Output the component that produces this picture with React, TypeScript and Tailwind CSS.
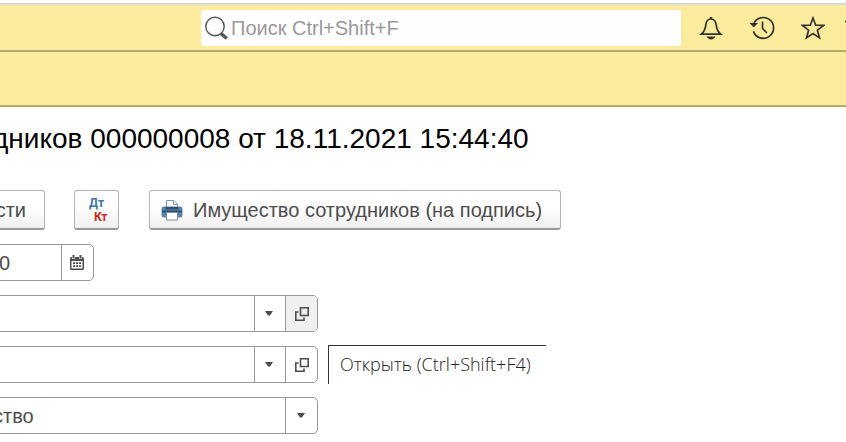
import { useState } from 'react';
import clsx from 'clsx';

interface IconButtonProps {
  label: string;
  className?: string;
  children: React.ReactNode;
}

interface FieldProps {
  label: string;
  value?: string;
  className: string;
  inputClassName?: string;
  children: React.ReactNode;
}

function SearchIcon() {
  return (
    <svg width="24" height="24" viewBox="0 0 24 24" fill="none" stroke="#595959">
      <circle cx="10" cy="10.5" r="9.2" strokeWidth="1.5" />
      <path d="M15.800 17.300l6 5.200" strokeWidth="3.6" />
    </svg>
  );
}

function BellIcon() {
  return (
    <svg width="24" height="24" viewBox="0 0 24 24" fill="none" stroke="#333" strokeWidth="1.7">
      <path d="M12 3c-3.400 0-4.800 2.300-5.200 5.800-.4 4.300-1.400 6.600-4.600 9.400h19.600c-3.200-2.800-4.200-5.100-4.600-9.400C16.800 5.300 15.400 3 12 3z" />
      <path d="M12 1v2" strokeWidth="2.5" />
      <path d="M7.500 20.500h9c-1 1.800-2.500 2.900-4.500 2.900s-3.500-1.100-4.500-2.900z" fill="#333" stroke="none" />
    </svg>
  );
}

function HistoryIcon() {
  return (
    <svg width="26" height="24" viewBox="0 0 26 24" className="shrink-0" fill="none" stroke="#333" strokeWidth="1.7">
      <path d="M4.500 8.200a10.400 10.400 0 1 1-.1 7.200" />
      <path d="M.5 7h8.500l-4.300 4.500z" fill="#333" stroke="none" />
      <path d="M13.500 5.500v7l4.500 4.500" />
    </svg>
  );
}

function StarIcon() {
  return (
    <svg width="24" height="24" viewBox="0 0 24 24" fill="none" stroke="#333" strokeWidth="1.7">
      <path d="M12 2l2.700 7.200 7.900.2-6.200 4.800 2.100 7.700-6.500-4.300-6.500 4.300 2.100-7.700-6.200-4.800 7.900-.2z" />
    </svg>
  );
}

function MenuIcon() {
  return (
    <svg width="38" height="24" viewBox="0 0 38 24" className="shrink-0" stroke="#333" strokeWidth="1.5">
      <path d="M0 5.500h38" />
    </svg>
  );
}

function PrinterIcon() {
  return (
    <svg width="22" height="22" viewBox="0 0 22 22">
      <path d="M5.500 9V1.500h7.500l3.500 3.500v4" fill="#fff" stroke="#8797a8" />
      <path d="M12.500 1.500v4h4" fill="none" stroke="#8797a8" />
      <rect x=".5" y="7.500" width="21" height="11" rx="2.500" fill="#5a83a9" />
      <path d="M4.500 8h13v2.500h-13z" fill="#2d5074" />
      <path d="M1 12.500h20" stroke="#2d5074" strokeWidth="2" />
      <path d="M5.500 13.500h11v7.500h-11z" fill="#fff" stroke="#7d8ea0" />
    </svg>
  );
}

function CalendarIcon() {
  return (
    <svg width="14" height="15" viewBox="0 0 14 15">
      <rect y="2" width="14" height="13" rx="1.500" fill="#4d4d4d" />
      <path d="M1.500 6h11v7.500h-11z" fill="#fff" />
      <path d="M2 1h3v3H2zM9 1h3v3H9z" fill="#fff" />
      <path d="M3.500 0v3.500M10.500 0v3.500" stroke="#4d4d4d" strokeWidth="2" />
      <path d="M3 8.200h8M3 11.200h8" stroke="#4d4d4d" strokeWidth="1.800" strokeDasharray="2 1" />
    </svg>
  );
}

function ArrowIcon() {
  return (
    <svg width="8" height="5" viewBox="0 0 8 5">
      <path d="M0 0h8L5 4.500H3z" fill="#4d4d4d" />
    </svg>
  );
}

function OpenIcon() {
  return (
    <svg width="14" height="14" viewBox="0 0 14 14" fill="none" stroke="#4d4d4d" strokeWidth="1.600">
      <path d="M5.500.8h7.700v7.700H5.500z" />
      <path d="M3.500 5H.8v8.200h8.200v-2.700" />
    </svg>
  );
}

function HeaderButton({ label, children }: IconButtonProps) {
  return (
    <button type="button" aria-label={label} className="flex h-6 w-6 shrink-0 items-center justify-center">
      {children}
    </button>
  );
}

function FieldButton({ label, className, children }: IconButtonProps) {
  return (
    <button
      type="button"
      aria-label={label}
      className={clsx('flex shrink-0 items-center justify-center border-l border-[#999]', className)}
    >
      {children}
    </button>
  );
}

function CommandButton({ label, className, children }: IconButtonProps) {
  return (
    <button
      type="button"
      aria-label={label}
      className={clsx(
        'flex h-10 items-center rounded-[3px] border border-b-2 border-[#b3b3b3] border-b-[#999] bg-linear-to-b from-white from-40% to-[#f0f0f0] text-xl whitespace-nowrap text-[#4d4d4d]',
        className
      )}
    >
      {children}
    </button>
  );
}

function Field({ label, value = '', className, inputClassName, children }: FieldProps) {
  const [text, setText] = useState(value);

  return (
    <div className={clsx('flex h-[37px] overflow-hidden rounded-[5px] border border-[#999] bg-white', className)}>
      <input
        type="text"
        aria-label={label}
        value={text}
        onChange={(e) => setText(e.target.value)}
        className={clsx('min-w-0 flex-1 outline-none', inputClassName)}
      />
      {children}
    </div>
  );
}

export default function App() {
  return (
    <div className="overflow-hidden bg-white pt-[3px] font-['Liberation_Sans',Arial,sans-serif] text-[#4d4d4d]">
      <header className="flex items-center gap-[18px] overflow-hidden border-t-2 border-b-2 border-t-[#d9d9d9] border-b-[#b5a970] bg-[#fbec9d] pt-[5px] pb-1 pl-[201px]">
        <label className="flex h-9 min-w-0 flex-1 items-center gap-0.5 rounded-[3px] bg-white pl-1">
          <SearchIcon />
          <input
            type="search"
            aria-label="Поиск"
            placeholder="Поиск Ctrl+Shift+F"
            className="min-w-0 flex-1 text-xl outline-none placeholder:text-[#999]"
          />
        </label>
        <div className="flex w-[147px] shrink-0 gap-[27px]">
          <HeaderButton label="Уведомления">
            <BellIcon />
          </HeaderButton>
          <HeaderButton label="История">
            <HistoryIcon />
          </HeaderButton>
          <HeaderButton label="Избранное">
            <StarIcon />
          </HeaderButton>
          <HeaderButton label="Меню">
            <MenuIcon />
          </HeaderButton>
        </div>
      </header>
      <div className="h-[55px] border-b-2 border-[#b5a970] bg-[#fbec9d]" />

      <main className="-ml-2 pt-4">
        <h1 className="text-[28px] leading-8 whitespace-nowrap text-black">
          дников 000000008 от 18.11.2021 15:44:40
        </h1>

        <div className="mt-[35px] flex">
          <CommandButton label="сти" className="w-[53px] justify-end pr-[18px]">
            сти
          </CommandButton>
          <CommandButton label="Дт Кт" className="ml-[29px] w-[45px] justify-center">
            <span className="flex w-[22px] flex-col font-[Roboto,sans-serif] text-[12px] leading-[14px] font-bold">
              <span className="text-[#3a76a8]">Дт</span>
              <span className="self-end text-[#cc2a1a]">Кт</span>
            </span>
          </CommandButton>
          <CommandButton
            label="Имущество сотрудников (на подпись)"
            className="ml-[30px] gap-[10px] pr-[18px] pl-[11px]"
          >
            <PrinterIcon />
            Имущество сотрудников (на подпись)
          </CommandButton>
        </div>

        <form className="mt-[14px] flex flex-col gap-[14px] text-xl">
          <Field label="Дата" value="0" className="w-[102px]" inputClassName="pl-1.5">
            <FieldButton label="Выбрать дату" className="w-8 pr-0.5">
              <CalendarIcon />
            </FieldButton>
          </Field>
          <Field label="Организация" className="w-[326px]">
            <FieldButton label="Выбрать" className="w-[31px] pr-0.5">
              <ArrowIcon />
            </FieldButton>
            <FieldButton label="Открыть" className="w-8 bg-[#f0f0f0]">
              <OpenIcon />
            </FieldButton>
          </Field>
          <div className="relative">
            <Field label="Подразделение" className="w-[326px]">
              <FieldButton label="Выбрать" className="w-[31px] pr-0.5">
                <ArrowIcon />
              </FieldButton>
              <FieldButton label="Открыть" className="w-8">
                <OpenIcon />
              </FieldButton>
            </Field>
            <div
              role="tooltip"
              className="absolute -top-px left-[336px] border-t border-l border-[#333] bg-white pt-1 pr-[15px] pb-1.5 pl-[11px] font-['Open_Sans','Noto_Sans',sans-serif] text-lg font-light whitespace-nowrap text-[#222]"
            >
              Открыть (Ctrl+Shift+F4)
            </div>
          </div>
          <Field label="Вид" value="ство" className="w-[326px]">
            <FieldButton label="Выбрать" className="w-8 pr-0.5">
              <ArrowIcon />
            </FieldButton>
          </Field>
        </form>
      </main>
    </div>
  );
}
